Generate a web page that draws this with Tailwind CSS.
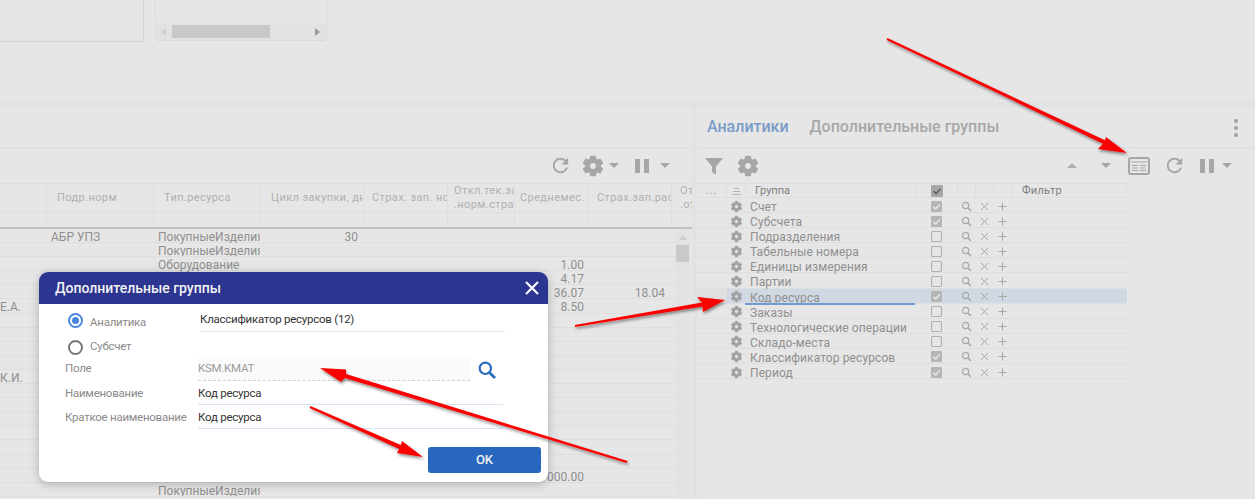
<!DOCTYPE html>
<html lang="ru">
<head>
<meta charset="UTF-8" />
<script src="https://cdn.jsdelivr.net/npm/@tailwindcss/browser@4"></script>
<title>Дополнительные группы</title>
</head>
<body class="relative w-[1255px] h-[499px] overflow-hidden bg-[#e6e6e6] font-['Roboto',sans-serif] text-[12px] text-[#8f8f8f]">

<svg class="hidden">
  <symbol id="gear" viewBox="0 0 24 24"><path stroke="currentColor" stroke-width="1.4" d="M19.14 12.94c.04-.3.06-.61.06-.94 0-.32-.02-.64-.07-.94l2.03-1.58c.18-.14.23-.41.12-.61l-1.92-3.32c-.12-.22-.37-.29-.59-.22l-2.39.96c-.5-.38-1.03-.7-1.62-.94l-.36-2.54c-.04-.24-.24-.41-.48-.41h-3.84c-.24 0-.43.17-.47.41l-.36 2.54c-.59.24-1.13.57-1.62.94l-2.39-.96c-.22-.08-.47 0-.59.22L2.74 8.87c-.12.21-.08.47.12.61l2.03 1.58c-.05.3-.09.63-.09.94s.02.64.07.94l-2.03 1.58c-.18.14-.23.41-.12.61l1.92 3.32c.12.22.37.29.59.22l2.39-.96c.5.38 1.03.7 1.62.94l.36 2.54c.05.24.24.41.48.41h3.84c.24 0 .44-.17.47-.41l.36-2.54c.59-.24 1.13-.56 1.62-.94l2.39.96c.22.08.47 0 .59-.22l1.92-3.32c.12-.22.07-.47-.12-.61l-2.01-1.58zM12 15.6c-1.98 0-3.6-1.62-3.6-3.6s1.62-3.6 3.6-3.6 3.6 1.62 3.6 3.6-1.62 3.6-3.6 3.6z" fill="currentColor" fill-rule="evenodd"/></symbol>
  <symbol id="refresh" viewBox="0 0 24 24"><path fill="currentColor" d="M17.65 6.35C16.2 4.9 14.21 4 12 4c-4.42 0-7.99 3.58-7.99 8s3.57 8 7.99 8c3.73 0 6.84-2.55 7.73-6h-2.08c-.82 2.33-3.04 4-5.65 4-3.31 0-6-2.69-6-6s2.69-6 6-6c1.66 0 3.14.69 4.22 1.78L13 11h7V4l-2.35 2.35z"/></symbol>
  <symbol id="search" viewBox="0 0 12 12"><circle cx="5" cy="5" r="3.4" fill="none" stroke="currentColor" stroke-width="1.3"/><path d="M7.6 7.6l3.2 3.2" stroke="currentColor" stroke-width="1.7"/></symbol>
  <symbol id="cross" viewBox="0 0 10 10"><path d="M1 1l8 8M9 1l-8 8" stroke="currentColor" stroke-width="1"/></symbol>
  <symbol id="plus" viewBox="0 0 10 10"><path d="M5 .5v9M.5 5h9" stroke="currentColor" stroke-width="1"/></symbol>
  <symbol id="checked" viewBox="0 0 12 12"><rect width="12" height="12" rx="1" fill="#b5b5b5"/><path d="M2.5 6.2l2.6 2.5 4.4-5" fill="none" stroke="#e9e9e9" stroke-width="1.6"/></symbol>
  <symbol id="checkedDark" viewBox="0 0 12 12"><rect width="12" height="12" rx="1" fill="#a8a8a8"/><path d="M2.500 6.200l2.600 2.500 4.400-5" fill="none" stroke="#5f5f5f" stroke-width="1.600"/></symbol>
  <symbol id="unchecked" viewBox="0 0 12 12"><rect x=".6" y=".6" width="10.8" height="10.8" rx="1" fill="none" stroke="#b0b0b0" stroke-width="1.2"/></symbol>
</svg>

<!-- top fragments -->
<div class="flex items-start gap-[11px] h-[102px]">
  <div class="w-[144px] h-[42px] border-r border-b border-[#ccd8df]"></div>
  <div class="flex flex-col justify-end w-[172px] h-[41px] rounded-b border border-t-0 border-[#dadada]">
    <div class="flex items-center h-[17px] bg-[#e2e2e2] rounded-b">
      <span class="ml-[5px] w-0 h-0 border-y-[4px] border-y-transparent border-r-[5px] border-r-[#cfcfcf]"></span>
      <span class="ml-[6px] w-[98px] h-[13px] bg-[#c8c8c8]"></span>
      <span class="ml-[45px] w-0 h-0 border-y-[4px] border-y-transparent border-l-[5px] border-l-[#9a9a9a]"></span>
    </div>
  </div>
</div>
<div class="h-[5px] bg-[#e0e2e4]"></div>

<div class="flex h-[392px]">
  <!-- left panel -->
  <section class="w-[692px] shrink-0 overflow-hidden">
    <div class="h-[41px] border-b border-[#dcdcdc]"></div>
    <div class="flex items-center justify-end h-[35px] pr-[22px] text-[#a6a6a6]">
      <svg class="w-[23px] h-[23px]"><use href="#refresh"/></svg>
      <svg class="ml-[9px] w-[24px] h-[24px]"><use href="#gear"/></svg>
      <span class="ml-[4px] w-0 h-0 border-x-[5px] border-x-transparent border-t-[5px] border-t-[#a6a6a6]"></span>
      <span class="ml-[16px] flex gap-[4px]"><i class="block w-[5px] h-[14px] bg-[#a6a6a6]"></i><i class="block w-[5px] h-[14px] bg-[#a6a6a6]"></i></span>
      <span class="ml-[11px] w-0 h-0 border-x-[5px] border-x-transparent border-t-[5px] border-t-[#a6a6a6]"></span>
    </div>
    <div id="leftHead" class="grid grid-cols-[46px_107px_107px_103px_84px_67px_74px_83px_21px] h-[30px] border-y border-[#dedede] text-[11px] tracking-[0.4px] leading-[14px] text-[#b0b0b0]">
      <div></div>
      <div class="flex items-center pl-[10px] border-l border-[#dedede]">Подр.норм</div>
      <div class="flex items-center pl-[10px] border-l border-[#dedede]">Тип.ресурса</div>
      <div class="flex items-center pl-[10px] border-l border-[#dedede] whitespace-nowrap overflow-hidden">Цикл закупки, дн</div>
      <div class="flex items-center pl-[8px] border-l border-[#dedede] whitespace-nowrap overflow-hidden">Страх. зап. но</div>
      <div class="flex flex-col justify-center pl-[6px] border-l border-[#dedede] whitespace-nowrap overflow-hidden"><span>Откл.тек.зап</span><span>.норм.страх</span></div>
      <div class="flex items-center pl-[5px] border-l border-[#dedede] whitespace-nowrap overflow-hidden">Среднемес. р</div>
      <div class="flex items-center pl-[8px] border-l border-[#dedede] whitespace-nowrap overflow-hidden">Страх.зап.рас</div>
      <div class="flex flex-col justify-center pl-[8px] border-l border-[#dedede] whitespace-nowrap overflow-hidden"><span>От</span><span>.от</span></div>
    </div>
    <div class="grid grid-cols-[46px_107px_107px_103px_84px_67px_74px_83px_21px] h-[16px] border-b-2 border-[#c2c2c2]">
      <div></div><div class="border-l border-[#dedede]"></div><div class="border-l border-[#dedede]"></div><div class="border-l border-[#dedede]"></div><div class="border-l border-[#dedede]"></div><div class="border-l border-[#dedede]"></div><div class="border-l border-[#dedede]"></div><div class="border-l border-[#dedede]"></div><div class="border-l border-[#dedede]"></div>
    </div>
    <div class="flex">
      <div id="leftRows" class="w-[675px] shrink-0"></div>
      <div class="flex flex-col items-center w-[15px] bg-[#e3e3e3] pt-[6px]">
        <span class="w-0 h-0 border-x-[4px] border-x-transparent border-b-[5px] border-b-[#cfcfcf]"></span>
        <span class="mt-[5px] w-[13px] h-[17px] bg-[#c9c9c9]"></span>
      </div>
    </div>
  </section>

  <div class="w-[5px] shrink-0 bg-[#e0e2e4]"></div>

  <!-- right panel -->
  <section class="flex-1 min-w-0">
    <div class="relative flex items-center h-[41px] pl-[10px] border-b border-[#dcdcdc] text-[16px] font-medium">
      <span class="text-[#7b9cc8]">Аналитики</span>
      <span class="ml-[21px] text-[#a8a8a8]">Дополнительные группы</span>
      <span class="absolute right-[17px] top-[12px] flex flex-col gap-[3px]"><i class="block w-[4px] h-[4px] rounded-full bg-[#a0a0a0]"></i><i class="block w-[4px] h-[4px] rounded-full bg-[#a0a0a0]"></i><i class="block w-[4px] h-[4px] rounded-full bg-[#a0a0a0]"></i></span>
    </div>
    <div class="flex items-center h-[35px] text-[#a6a6a6]">
      <svg class="ml-[7px] w-[20px] h-[20px]" viewBox="0 0 20 20"><path fill="currentColor" d="M1 2h18l-7 8.5V19l-4-3v-5.500z"/></svg>
      <svg class="ml-[12px] w-[24px] h-[24px]"><use href="#gear"/></svg>
      <span class="ml-[307px] w-0 h-0 border-x-[5px] border-x-transparent border-b-[5px] border-b-[#b0b0b0]"></span>
      <span class="ml-[24px] w-0 h-0 border-x-[5px] border-x-transparent border-t-[5px] border-t-[#a6a6a6]"></span>
      <svg class="ml-[17px] w-[22px] h-[18px]" viewBox="0 0 22 18"><rect x="1" y="1" width="20" height="16" rx="2" fill="none" stroke="currentColor" stroke-width="2"/><path d="M3 5h16M4 8.500h6M12 8.500h6M4 11h6M12 11h6M4 13.500h6M12 13.500h6" stroke="currentColor" stroke-width="1.200"/></svg>
      <svg class="ml-[13px] w-[23px] h-[23px]"><use href="#refresh"/></svg>
      <span class="ml-[14px] flex gap-[4px]"><i class="block w-[5px] h-[14px] bg-[#a6a6a6]"></i><i class="block w-[5px] h-[14px] bg-[#a6a6a6]"></i></span>
      <span class="ml-[8px] w-0 h-0 border-x-[5px] border-x-transparent border-t-[5px] border-t-[#a6a6a6]"></span>
    </div>
    <div class="w-[430px]">
      <div class="grid grid-cols-[29px_19px_170px_42px_18px_18px_18px_116px] h-[15px] border-y border-[#dedede] text-[11px] leading-[14px] text-[#7d7d7d]">
        <div class="text-center tracking-[1px] text-[#a0a0a0]">...</div>
        <div class="flex flex-col justify-center items-center gap-[2px] border-l border-[#dedede]"><i class="block w-[5px] h-px bg-[#b5b5b5]"></i><i class="block w-[7px] h-px bg-[#b5b5b5]"></i><i class="block w-[9px] h-px bg-[#b5b5b5]"></i></div>
        <div class="pl-[9px] border-l border-[#dedede]">Группа</div>
        <div class="flex items-center justify-center border-l border-[#dedede]"><svg class="w-[12px] h-[12px]"><use href="#checkedDark"/></svg></div>
        <div class="border-l border-[#dedede]"></div>
        <div class="border-l border-[#dedede]"></div>
        <div class="border-l border-[#dedede]"></div>
        <div class="pl-[10px] border-l border-r border-[#dedede] tracking-[0.3px]">Фильтр</div>
      </div>
      <div id="rightRows"></div>
    </div>
  </section>
</div>

<!-- modal -->
<div class="absolute left-[39px] top-[272px] w-[509px] h-[210px] rounded-[9px] bg-white shadow-[0_2px_10px_rgba(0,0,0,0.25)] overflow-hidden text-[11.5px] tracking-[-0.25px] text-[#8a8a8a]">
  <div class="flex items-center justify-between h-[32px] pl-[16px] pr-[8px] bg-[#2c3590] text-[14px] tracking-normal font-medium text-[#f2f2f2]">
    <span>Дополнительные группы</span>
    <svg class="w-[16px] h-[16px]" viewBox="0 0 16 16"><path d="M2 2l12 12M14 2L2 14" stroke="#fff" stroke-width="2.200"/></svg>
  </div>
  <div class="pt-[4px]">
    <div class="flex items-center h-[24px]">
      <span class="ml-[29px] flex items-center justify-center w-[15px] h-[15px] rounded-full border-2 border-[#4a86e0]"><i class="block w-[7px] h-[7px] rounded-full bg-[#4a86e0]"></i></span>
      <span class="ml-[7px] w-[110px] pt-[5px]">Аналитика</span>
      <span class="flex items-center w-[305px] h-[24px] border-b border-[#dfe9f5] text-[#333]">Классификатор ресурсов (12)</span>
    </div>
    <div class="flex items-center h-[30px]">
      <span class="ml-[29px] block w-[15px] h-[15px] rounded-full border-2 border-[#777]"></span>
      <span class="ml-[7px]">Субсчет</span>
    </div>
    <div class="flex h-[19px]">
      <span class="ml-[26px] w-[133px] leading-[13px]">Поле</span>
      <span class="w-[272px] h-[23px] -mt-[5px] box-content bg-[#fafafa] border-b border-dashed border-[#d0d0d0] text-[#9a9a9a] leading-[23px]">KSM.KMAT</span>
      <svg class="ml-[7px] -mt-[2px] w-[20px] h-[20px] text-[#2a6bc0]"><use href="#search"/></svg>
    </div>
    <div class="flex items-center h-[24px]">
      <span class="ml-[26px] w-[133px] pt-[2px]">Наименование</span>
      <span class="flex items-center w-[305px] h-[24px] pt-[2px] border-b border-[#d6e3f2] text-[#333]">Код ресурса</span>
    </div>
    <div class="flex items-center h-[24px]">
      <span class="ml-[26px] w-[133px] pt-[2px] whitespace-nowrap">Краткое наименование</span>
      <span class="flex items-center w-[305px] h-[24px] pt-[2px] border-b border-[#d6e3f2] text-[#333]">Код ресурса</span>
    </div>
    <div class="flex justify-end mt-[18px] pr-[7px]">
      <button class="w-[113px] h-[26px] rounded-[3px] bg-[#2767bf] text-[13px] tracking-normal font-medium text-[#f2f2f2]">OK</button>
    </div>
  </div>
</div>

<!-- annotation arrows -->
<svg class="absolute inset-0 w-[1255px] h-[499px] pointer-events-none" viewBox="0 0 1255 499">
  <defs><filter id="sh" x="-20%" y="-20%" width="140%" height="140%"><feDropShadow dx="1" dy="2" stdDeviation="1.500" flood-color="#000" flood-opacity="0.45"/></filter></defs>
  <g fill="#fa0505" filter="url(#sh)">
    <polygon points="887.400,38.100 1104.900,140.200 1106,137 1127,153 1098,149 1103.100,143.800 886.600,39.900"/>
    <polygon points="575,325 702,302.500 697,297 725,300 703,312 702.500,306.500 575,327"/>
    <polygon points="627.600,461 346,374 346,369.500 320,368 341,382 344.800,378 626.800,463"/>
    <polygon points="310.400,406 400.800,445 402,441 423,457 397,453 399.200,449 309.600,408"/>
  </g>
</svg>

<script>
  // left table body: row index -> cells
  const leftCols = "grid grid-cols-[46px_107px_107px_103px_84px_67px_74px_83px_4px] h-[14.1px] border-b border-[#dedede] leading-[16px] whitespace-nowrap";
  const leftData = {
    0: { b: "АБР УПЗ", c: "ПокупныеИзделия", d: "30" },
    1: { c: "ПокупныеИзделия" },
    2: { c: "Оборудование", g: "1.00" },
    3: { g: "4.17" },
    4: { g: "36.07", h: "18.04" },
    5: { a: "Е.А.", g: "8.50" },
    10: { a: "К.И." },
    17: { g: "4 000.00" },
    18: { c: "ПокупныеИзделия" }
  };
  let html = "";
  for (let i = 0; i < 19; i++) {
    const r = leftData[i] || {};
    html += `<div class="${leftCols}">
      <div class="overflow-hidden">${r.a || ""}</div>
      <div class="pl-[5px]">${r.b || ""}</div>
      <div class="pl-[5px] overflow-hidden">${r.c || ""}</div>
      <div class="pr-[5px] text-right">${r.d || ""}</div>
      <div></div><div></div>
      <div class="pr-[4px] text-right">${r.g || ""}</div>
      <div class="pr-[6px] text-right">${r.h || ""}</div>
      <div></div></div>`;
  }
  document.getElementById("leftRows").innerHTML = html;

  // right table body: name, checked
  const groups = [
    ["Счет", 1], ["Субсчета", 1], ["Подразделения", 0], ["Табельные номера", 0],
    ["Единицы измерения", 0], ["Партии", 0], ["Код ресурса", 1], ["Заказы", 0],
    ["Технологические операции", 0], ["Складо-места", 0], ["Классификатор ресурсов", 1], ["Период", 1]
  ];
  document.getElementById("rightRows").innerHTML = groups.map(([name, on]) => {
    const sel = name === "Код ресурса";
    return `<div class="grid grid-cols-[30px_188px_42px_18px_18px_18px_116px] h-[15.1px] border-b border-[#dedede] leading-[14px] ${sel ? "bg-[#d0d8e4]" : ""}">
      <div class="${sel ? "bg-[#e0e0e0]" : ""}"></div>
      <div class="relative flex items-center text-[#9e9e9e]">
        <svg class="ml-[3px] w-[13px] h-[13px]"><use href="#gear"/></svg>
        <span class="ml-[7px] pt-[2px] text-[#8f8f8f] tracking-[0.1px]">${name}</span>
        ${sel ? '<i class="absolute left-[18px] right-0 bottom-0 h-[2px] bg-[#6f9bd0]"></i>' : ""}
      </div>
      <div class="flex items-center justify-center"><svg class="w-[11px] h-[11px]"><use href="#${on ? "checked" : "unchecked"}"/></svg></div>
      <div class="flex items-center justify-center text-[#a8a8a8]"><svg class="w-[11px] h-[11px]"><use href="#search"/></svg></div>
      <div class="flex items-center justify-center text-[#a0a0a0]"><svg class="w-[9px] h-[9px]"><use href="#cross"/></svg></div>
      <div class="flex items-center justify-center text-[#a0a0a0]"><svg class="w-[9px] h-[9px]"><use href="#plus"/></svg></div>
      <div></div></div>`;
  }).join("");
</script>
</body>
</html>
